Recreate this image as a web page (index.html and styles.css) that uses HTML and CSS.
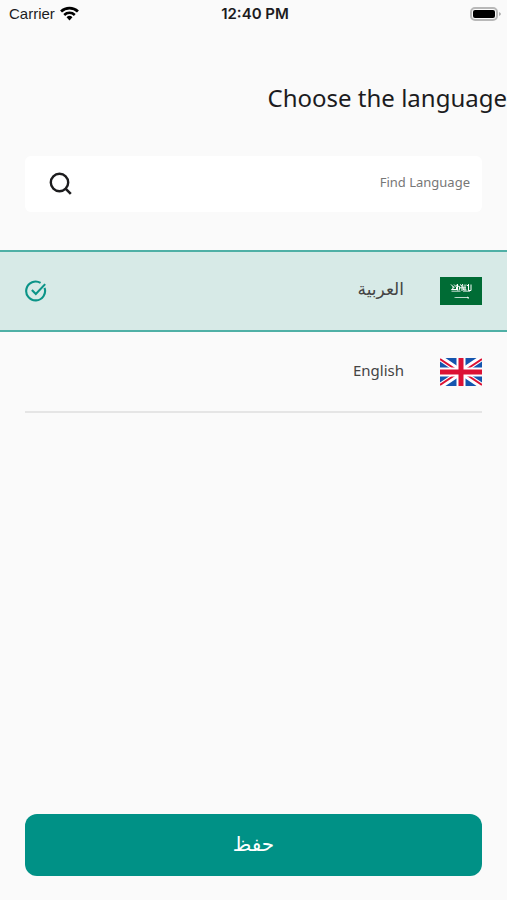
FILE: index.html
```html
<!doctype html>
<html lang="ar" dir="rtl">
	<head>
		<meta charset="UTF-8">
		<meta name="viewport" content="width=device-width, initial-scale=1.0">
		<title>Choose the language</title>
		<link rel="stylesheet" href="styles.css">
	</head>
	<body>

		<div class="statusbar" dir="ltr">
			<div class="carrier">
				<span>Carrier</span>
				<svg class="wifi" viewBox="0 0 18 14">
					<path d="M1 5.2a11.6 11.6 0 0 1 16 0" fill="none" stroke="#000" stroke-width="2.6"/>
					<path d="M4 8.4a7.2 7.2 0 0 1 10 0" fill="none" stroke="#000" stroke-width="2.4"/>
					<path d="M6.200 10.500a4.200 4.200 0 0 1 5.600 0L9 13.600z"/>
				</svg>
			</div>
			<div class="clock">12:40 PM</div>
			<svg class="battery" viewBox="0 0 31 14">
				<rect x="1" y="1" width="26" height="12" rx="4" fill="#fafafa" stroke="#b8b8b8" stroke-width="2"/>
				<rect x="3" y="3" width="22" height="8" rx="2"/>
				<path d="M29 5v4q2-1 2-2t-2-2z" fill="#b0b0b0"/>
			</svg>
		</div>

		<h1 class="title" dir="ltr">Choose the language</h1>

		<form class="content">
			<div class="search">
				<input type="text" class="searchInput" placeholder="Find Language" aria-label="Find Language">
				<button type="button" class="searchButton" aria-label="Search">
					<svg viewBox="0 0 24 24" fill="none" stroke="#1c1c1e">
						<circle cx="10.5" cy="10.5" r="8.7" stroke-width="2.4"/>
						<path d="M16.800 16.800l5 5" stroke-width="2.6"/>
					</svg>
				</button>
			</div>

			<div class="languages">
				<label class="language">
					<input type="radio" name="language" value="ar" checked>
					<span class="row">
						<svg class="flag" viewBox="0 0 42 28">
							<rect width="42" height="28" fill="#006c35"/>
							<!-- shahada -->
							<g fill="none" stroke="#fff" stroke-width="1">
								<path d="M11 7.500l3 3-2.500 2h5M14 7.500l2.500 2.500v3M17.500 7v6.500M16 8l4 2-1 3.500M20 7.500l2 1.500v5M22.500 7l1 6h3M25 7.500v5.500M26.500 8l2 1v4.500M28.500 7v6.500h2.500M31 7.500v6"/>
								<path d="M11.500 14.200h9M23 14.200h7M12 10h2.500M19 10.800h7" stroke-width=".8"/>
							</g>
							<!-- sword -->
							<path d="M14 20.200h13v-1l.8 1H29v1.400h-1.200l-.5-.7H16q-1.500 0-2-.7z" fill="#fff"/>
						</svg>
						<span class="name arabic">العربية</span>
						<svg class="check" viewBox="0 0 24 24" fill="none" stroke="#0b9488" stroke-width="2.3">
							<path d="M21.300 8.500A10.300 10.300 0 1 1 17 3.200"/>
							<path d="M7.500 11l4.300 4.300L22 4.500"/>
						</svg>
					</span>
				</label>
				<label class="language">
					<input type="radio" name="language" value="en">
					<span class="row">
						<svg class="flag" viewBox="0 0 42 28">
							<rect width="42" height="28" fill="#1455ae"/>
							<path d="M0 0l42 28M42 0L0 28" stroke="#fff" stroke-width="6"/>
							<path d="M0 1l18 12M24 15l18 12M42 1L24 13M18 15L0 27" stroke="#dc1234" stroke-width="2"/>
							<path d="M21 0v28M0 14h42" stroke="#fff" stroke-width="9"/>
							<path d="M21 0v28M0 14h42" stroke="#dc1234" stroke-width="5"/>
						</svg>
						<span class="name">English</span>
						<svg class="check" viewBox="0 0 24 24" fill="none" stroke="#0b9488" stroke-width="2.3">
							<path d="M21.300 8.500A10.300 10.300 0 1 1 17 3.200"/>
							<path d="M7.500 11l4.300 4.300L22 4.500"/>
						</svg>
					</span>
				</label>
			</div>

			<button type="submit" class="save">حفظ</button>
		</form>

	</body>
</html>
```
FILE: styles.css
```css
*{
	box-sizing: border-box;
}

body{
	margin: 0;
	min-height: 100vh;
	display: flex;
	flex-direction: column;
	background: #fafafa;
	color: #1c1c1e;
	font-family: "Noto Sans", "DejaVu Sans", sans-serif;
}

.statusbar{
	display: grid;
	grid-template-columns: 1fr auto 1fr;
	align-items: center;
	height: 27px;
	padding: 0 6px 0 9px;
	font-family: "Liberation Sans", Inter, sans-serif;
	font-size: 15px;
}

.carrier{
	display: flex;
	align-items: center;
	gap: 5px;
}

.wifi{
	width: 19px;
	height: 15px;
}

.clock{
	font-family: Inter, "Liberation Sans", sans-serif;
	font-weight: 600;
}

.battery{
	width: 31px;
	height: 14px;
	justify-self: end;
}

.title{
	margin: 53px 0 40px;
	font-size: 24px;
	font-weight: 400;
	line-height: 36px;
	text-align: right;
}

.content{
	flex: 1;
	display: flex;
	flex-direction: column;
	padding-bottom: 24px;
}

.search{
	display: flex;
	align-items: center;
	height: 56px;
	margin: 0 25px;
	padding: 0 12px 0 24px;
	background: #fff;
	border-radius: 6px;
}

.searchInput{
	flex: 1;
	min-width: 0;
	height: 52px;
	padding: 0 0 4px;
	border: 0;
	outline: 0;
	background: none;
	font-family: inherit;
	font-size: 13px;
}

.searchInput::placeholder{
	color: #777;
	opacity: 1;
}

.searchButton{
	display: flex;
	padding: 0;
	border: 0;
	background: none;
}

.searchButton svg{
	width: 24px;
	height: 24px;
}

.languages{
	margin-top: 38px;
}

.language{
	display: block;
	cursor: pointer;
}

.language input{
	position: absolute;
	opacity: 0;
}

.row{
	display: flex;
	align-items: center;
	height: 81px;
	margin: 0 25px;
	border-bottom: 2px solid #e5e5e5;
}

.language input:checked + .row{
	height: 82px;
	margin: 0;
	padding: 0 25px;
	background: #d7eae7;
	border-top: 2px solid #4fb0a6;
	border-bottom: 2px solid #4fb0a6;
}

.flag{
	width: 42px;
	height: 28px;
}

.name{
	flex: 1;
	padding: 0 36px 4px;
	color: #444;
	font-size: 15px;
	line-height: 24px;
}

.arabic{
	font-size: 17px;
}

.check{
	width: 22px;
	height: 22px;
	visibility: hidden;
}

.language input:checked + .row .check{
	visibility: visible;
}

.save{
	height: 62px;
	margin: auto 25px 0;
	padding: 0 0 4px;
	border: 0;
	border-radius: 12px;
	background: #009186;
	color: #fff;
	font-family: inherit;
	font-size: 20px;
}
```
